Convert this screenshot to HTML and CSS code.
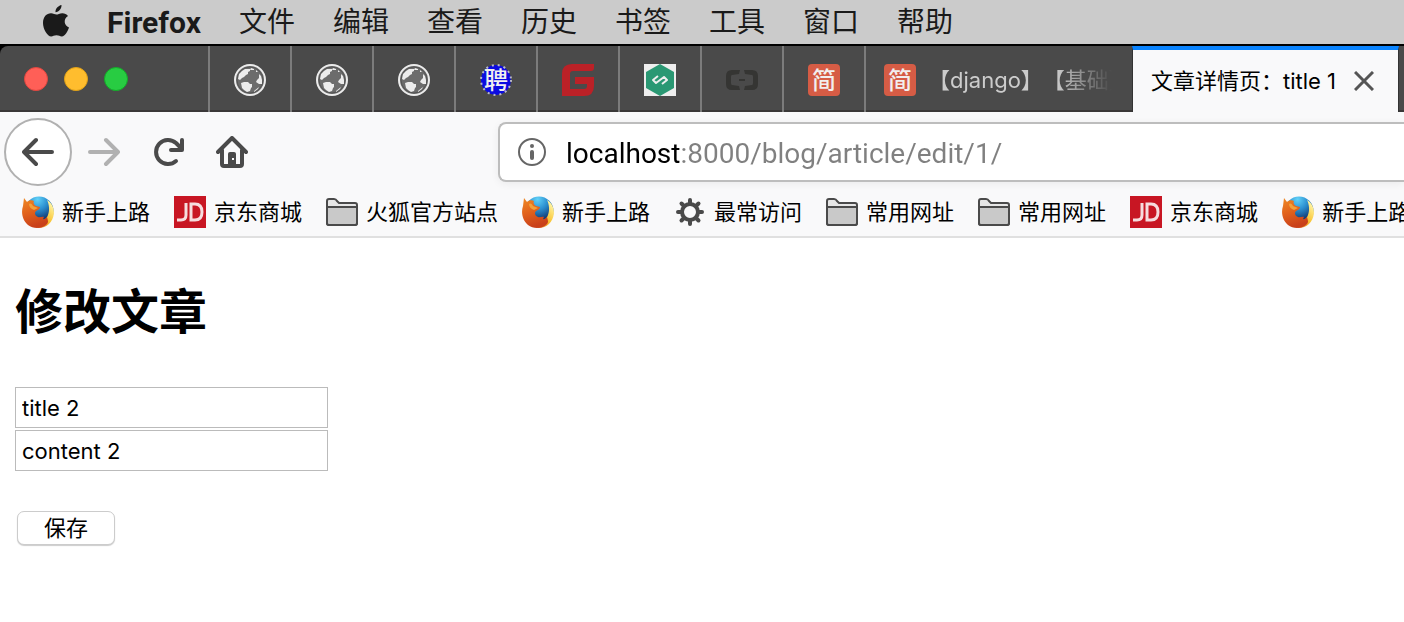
FILE: index.html
```html
<!DOCTYPE html>
<html lang="zh-CN">
  <head>
    <meta charset="UTF-8" />
    <meta name="viewport" content="width=device-width, initial-scale=1.0" />
    <title>文章详情页&#xFF1A;title 1</title>
    <link rel="stylesheet" href="styles.css">
  </head>
  <body>
    <!-- shared icons -->
    <svg class="sprite" aria-hidden="true">
      <defs>
        <radialGradient id="globeBlue" cx="0.45" cy="0.1" r="0.7">
          <stop offset="0" stop-color="#62d2f8" />
          <stop offset="0.5" stop-color="#2b8fd0" />
          <stop offset="1" stop-color="#123a72" />
        </radialGradient>
        <linearGradient id="foxFire" x1="0" y1="0" x2="0.3" y2="1">
          <stop offset="0" stop-color="#ee8a25" />
          <stop offset="0.5" stop-color="#e2631c" />
          <stop offset="1" stop-color="#c9401a" />
        </linearGradient>
        <linearGradient id="foxTail" x1="0.6" y1="0" x2="0" y2="1">
          <stop offset="0" stop-color="#fff3a0" />
          <stop offset="0.5" stop-color="#f9c433" />
          <stop offset="1" stop-color="#e2631c" />
        </linearGradient>
      </defs>
      <symbol id="globe" viewBox="0 0 32 32">
        <circle cx="16" cy="16" r="15" fill="#6c6c6c" stroke="#ececec" stroke-width="2" />
        <circle cx="16" cy="16" r="13" fill="none" stroke="#555" stroke-width="1" />
        <path fill="#ececec" d="M4 15 5 10 8 7 11 5 16 5 16 7 14 8 14 10 12 11 10 13 8 14 6 16ZM7 19 10 18 14 18 16 20 18 20 18 23 17 24 16 27 13 28 10 26 8 24ZM22 18 23 16 25 14 25 10 27 12 28 16 28 20 25 20ZM17 4 20 5 20 6 16 6ZM22 6 24 8 22 8ZM20 27 25 23 24 25 20 28Z" />
      </symbol>
      <symbol id="jian" viewBox="0 0 32 32">
        <rect width="32" height="32" rx="4" fill="#d65c45" />
        <text class="glyph" x="16" y="25" font-size="24" text-anchor="middle" fill="#f2eeee">简</text>
      </symbol>
      <symbol id="firefox" viewBox="0 0 32 32">
        <circle cx="17" cy="15" r="14.5" fill="url(#globeBlue)" />
        <path fill="url(#foxTail)" d="M25 4C30 7 32 12 32 17 31 26 25 32 16 32L15 27C21 27 24 24 26 19 28 14 27 8 25 4Z" />
        <path fill="url(#foxFire)" d="M2 2 5 6C7 4 10 4 12 5 11 7 12 9 14 10L18 11C18 13 16 14 14 15 12 17 13 20 16 21 18 22 20 20 22 21 20 24 22 24 25 21 26 25 27 26 24 29 19 33 11 33 6 29 0 24-1 16 1 10Z" />
        <path fill="#f3a23a" d="M7 8C9 7 10 8 11 10L16 12 12 14C9 13 7 11 7 8Z" />
      </symbol>
      <symbol id="jd" viewBox="0 0 32 32">
        <rect width="32" height="32" fill="#c81623" />
        <path fill="none" stroke="#f6dcde" stroke-width="3" d="M12 7V19Q12 24 7 24H3M17 8V24H21Q28 24 28 16 28 8 21 8Z" />
      </symbol>
      <symbol id="folder" viewBox="0 0 32 32">
        <path fill="#e6e6e6" stroke="#4a4a4a" stroke-width="2" stroke-linejoin="round" d="M1 27V5Q1 3 3 3H8Q10 3 11 5L13 7H29Q31 7 31 9V27Q31 29 29 29H3Q1 29 1 27Z" />
        <path fill="#c9c9c9" stroke="#4a4a4a" stroke-width="2" d="M1 11H31V27Q31 29 29 29H3Q1 29 1 27Z" />
      </symbol>
      <symbol id="gear" viewBox="0 0 32 32">
        <circle cx="16" cy="16" r="8" fill="none" stroke="#4a4a4a" stroke-width="4" />
        <path stroke="#4a4a4a" stroke-width="4" stroke-linecap="round" d="M16 4V7M16 25V28M4 16H7M25 16H28M7.500 7.500 10 10M22 22 24.500 24.500M24.500 7.500 22 10M10 22 7.500 24.500" />
      </symbol>
    </svg>

    <nav class="menu-bar">
      <svg class="apple" viewBox="0 0 26 32" aria-label="Apple">
        <path fill="#1a1a1a" d="M18.500 0C18.800 3.600 16 7 12.500 7.200 12.200 3.800 15.200.600 18.500 0ZM25 11C20 14 21 20.500 26 22.600 25 26 22 31.500 18.800 31.500 16.800 31.500 16 30.300 13.500 30.300 11 30.300 10 31.500 8.200 31.500 4.500 31.500 0 24 0 18 0 12 3.500 8.300 8 8.300 10.300 8.300 12 9.600 13.400 9.600 14.800 9.600 16.800 8.100 19.500 8.200 21.500 8.300 23.700 9.200 25 11Z" />
      </svg>
      <strong>Firefox</strong>
      <span>文件</span>
      <span>编辑</span>
      <span>查看</span>
      <span>历史</span>
      <span>书签</span>
      <span>工具</span>
      <span>窗口</span>
      <span>帮助</span>
    </nav>

    <div class="tab-frame">
      <div class="tab-bar">
        <div class="window-buttons">
          <button class="dot close" aria-label="关闭"></button>
          <button class="dot minimize" aria-label="最小化"></button>
          <button class="dot zoom" aria-label="缩放"></button>
        </div>
        <div class="tab"><svg class="icon"><use href="#globe" /></svg></div>
        <div class="tab"><svg class="icon"><use href="#globe" /></svg></div>
        <div class="tab"><svg class="icon"><use href="#globe" /></svg></div>
        <div class="tab">
          <svg class="icon" viewBox="0 0 32 32">
            <circle cx="16" cy="16" r="15" fill="#0b0be0" />
            <circle cx="16" cy="16" r="15" fill="none" stroke="#b8b8c8" stroke-width="2" stroke-dasharray="2 4" />
            <text class="glyph" x="16" y="25" font-size="24" text-anchor="middle" fill="#f0f0f0">聘</text>
          </svg>
        </div>
        <div class="tab">
          <svg class="icon" viewBox="0 0 32 32">
            <path fill="#bb2127" d="M10 0H32V4Q32 7 29 7H11Q8 7 8 10V25H22Q25 25 25 22V20H13V13H32V22Q32 32 22 32H0V10Q0 0 10 0Z" />
          </svg>
        </div>
        <div class="tab">
          <svg class="icon" viewBox="0 0 32 32">
            <rect width="32" height="32" fill="#eee" />
            <path fill="#2a9873" d="M16 0 30 8V24L16 32 2 24V8Z" />
            <path fill="none" stroke="#eee" stroke-width="2" stroke-linejoin="round" d="M14 12 9 16 12 19 20 13 23 16 18 20" />
          </svg>
        </div>
        <div class="tab">
          <svg class="icon" viewBox="0 0 32 32">
            <path fill="#353533" d="M14 6 13 10 6 11Q5 11 5 13V19Q5 21 6 21L13 22 14 26H6Q0 26 0 20V12Q0 6 6 6ZM18 6 19 10 26 11Q27 11 27 13V19Q27 21 26 21L19 22 18 26H26Q32 26 32 20V12Q32 6 26 6ZM13 15H19V17H13Z" />
          </svg>
        </div>
        <div class="tab"><svg class="icon"><use href="#jian" /></svg></div>
        <div class="tab wide">
          <svg class="icon"><use href="#jian" /></svg>
          <span class="tab-title">【django】【基础】</span>
        </div>
        <div class="tab active">
          <span>文章详情页&#xFF1A;title 1</span>
          <button class="tab-close" aria-label="关闭标签页">
            <svg viewBox="0 0 20 20"><path d="M1 1 19 19M19 1 1 19" /></svg>
          </button>
        </div>
      </div>
    </div>

    <div class="toolbar">
      <div class="nav-buttons">
        <button class="back" aria-label="后退">
          <svg class="icon line" viewBox="0 0 32 32"><path d="M30 16H2M14 4 2 16 14 28" /></svg>
        </button>
        <button class="forward" aria-label="前进" disabled>
          <svg class="icon line" viewBox="0 0 32 32"><path d="M2 16H30M18 4 30 16 18 28" /></svg>
        </button>
        <button aria-label="刷新">
          <svg class="icon line" viewBox="0 0 32 32">
            <path d="M24 25A12 12 0 1 1 24 7L28 11M30 4V14H19" />
          </svg>
        </button>
        <button aria-label="主页">
          <svg class="icon line" viewBox="0 0 32 32">
            <path d="M2 16 16 2 30 16M6 14V28Q6 30 8 30H24Q26 30 26 28V14" />
            <path class="door" d="M12 30V18Q12 16 14 16H18Q20 16 20 18V30Z" />
            <rect x="16" y="22" width="2" height="2" fill="#f9f9fa" stroke="none" />
          </svg>
        </button>
      </div>
      <div class="url-bar">
        <svg class="info" viewBox="0 0 28 28">
          <circle cx="14" cy="14" r="13" />
          <path d="M14 14V20" stroke-width="4" stroke-linecap="round" />
          <circle class="info-dot" cx="14" cy="8" r="2" />
        </svg>
        <input type="text" class="url" aria-label="地址" value="localhost:8000/blog/article/edit/1/" />
      </div>
    </div>

    <div class="bookmarks">
      <a href="#"><svg class="icon"><use href="#firefox" /></svg>新手上路</a>
      <a href="#"><svg class="icon"><use href="#jd" /></svg>京东商城</a>
      <a href="#"><svg class="icon"><use href="#folder" /></svg>火狐官方站点</a>
      <a href="#"><svg class="icon"><use href="#firefox" /></svg>新手上路</a>
      <a href="#"><svg class="icon"><use href="#gear" /></svg>最常访问</a>
      <a href="#"><svg class="icon"><use href="#folder" /></svg>常用网址</a>
      <a href="#"><svg class="icon"><use href="#folder" /></svg>常用网址</a>
      <a href="#"><svg class="icon"><use href="#jd" /></svg>京东商城</a>
      <a href="#"><svg class="icon"><use href="#firefox" /></svg>新手上路</a>
    </div>

    <main>
      <h1>修改文章</h1>
      <form>
        <input type="text" name="title" aria-label="标题" value="title 2" />
        <input type="text" name="content" aria-label="内容" value="content 2" />
        <button type="submit">保存</button>
      </form>
    </main>
  </body>
</html>
```

FILE: styles.css
```css
:root {
  --chrome: #f9f9fa;
  --tab-bg: #4a4a4a;
  --ink: #4a4a4a;
}

* {
  box-sizing: border-box;
}

body {
  margin: 0;
  font-family: Inter, "Noto Sans CJK SC", sans-serif;
  font-size: 22px;
  color: #000;
  background: white;
  overflow: hidden;
  text-spacing-trim: space-all;
}

button {
  border: none;
  background: none;
  padding: 0;
  font: inherit;
  color: inherit;
}

.sprite {
  position: absolute;
  width: 0;
  height: 0;
}

.icon {
  width: 32px;
  height: 32px;
  flex: none;
  display: block;
}

.glyph {
  font-family: "Noto Sans CJK SC", sans-serif;
  font-weight: 500;
}

/* menu bar */
.menu-bar {
  display: flex;
  align-items: center;
  gap: 38px;
  height: 44px;
  padding: 2px 0 0 43px;
  background: #cbcbcb;
  color: #1a1a1a;
  font-family: Roboto, "Noto Sans CJK SC", sans-serif;
  font-size: 28px;
  line-height: 40px;
  white-space: nowrap;
}

.menu-bar strong {
  font-size: 30px;
}

.apple {
  width: 26px;
  height: 32px;
  margin-bottom: 4px;
}

/* tabs */
.tab-frame {
  background: #000;
  padding-top: 2px;
}

.tab-bar {
  display: flex;
  height: 66px;
  background: var(--tab-bg);
  border-top-left-radius: 8px;
  box-shadow: inset 0 -2px #3a3838;
}

.window-buttons {
  display: flex;
  align-items: center;
  gap: 16px;
  width: 208px;
  padding-left: 24px;
  flex: none;
}

.dot {
  width: 24px;
  height: 24px;
  border-radius: 50%;
}

.close {
  background: #ff5f57;
  border: 1px solid #e2463f;
}

.minimize {
  background: #ffbd2e;
  border: 1px solid #e1a116;
}

.zoom {
  background: #28cc42;
  border: 1px solid #12ac28;
}

.tab {
  display: flex;
  align-items: center;
  justify-content: center;
  flex: none;
  width: 82px;
  padding-top: 2px;
  border-left: 2px solid #7c7c7c;
}

.tab.wide {
  width: 268px;
  padding-left: 18px;
  justify-content: flex-start;
  gap: 12px;
  color: #ccc;
  line-height: 28px;
}

.tab-title {
  width: 184px;
  overflow: hidden;
  white-space: nowrap;
  mask-image: linear-gradient(to right, #000 128px, transparent);
}

.tab.active {
  width: 267px;
  padding: 0 24px 0 18px;
  justify-content: space-between;
  background: var(--chrome);
  border-left: 1px solid #333;
  border-right: 1px solid #333;
  border-top: 4px solid #0a84ff;
  line-height: 28px;
  white-space: nowrap;
}

.tab-close svg {
  display: block;
  width: 20px;
  height: 20px;
  stroke: #555;
  stroke-width: 3;
}

/* navigation */
.toolbar {
  display: flex;
  align-items: center;
  height: 80px;
  background: var(--chrome);
}

.nav-buttons {
  display: flex;
  align-items: center;
  gap: 32px;
  width: 498px;
  padding-left: 4px;
  flex: none;
}

.line {
  fill: none;
  stroke: var(--ink);
  stroke-width: 4;
  stroke-linecap: round;
  stroke-linejoin: round;
}

.back {
  width: 68px;
  height: 68px;
  padding: 16px;
  border: 2px solid #b1b1b1;
  border-radius: 50%;
  background: white;
}

.forward {
  margin-left: -16px;
}

.forward .line {
  stroke: #b1b1b1;
}

.line .door {
  fill: var(--ink);
  stroke: none;
}

.url-bar {
  display: flex;
  align-items: center;
  gap: 20px;
  flex: 1;
  height: 60px;
  padding-left: 18px;
  border: 2px solid #bdbdbd;
  border-right: none;
  border-radius: 8px 0 0 8px;
  background: white;
  box-shadow: 0 2px 8px rgba(0, 0, 0, 0.06);
}

.info {
  width: 28px;
  height: 28px;
  flex: none;
  fill: none;
  stroke: #666;
  stroke-width: 2;
}

.info-dot {
  fill: #666;
  stroke: none;
}

/* host in black, the rest of the address in grey */
.url {
  flex: 1;
  border: none;
  outline: none;
  padding: 4px 0 0;
  font-family: Roboto, sans-serif;
  font-size: 28px;
  line-height: 40px;
  color: transparent;
  background: linear-gradient(to right, #000 114px, #808080 114px);
  -webkit-background-clip: text;
  background-clip: text;
}

/* bookmarks */
.bookmarks {
  display: flex;
  align-items: center;
  gap: 24px;
  height: 46px;
  padding: 0 0 4px 22px;
  background: var(--chrome);
  border-bottom: 2px solid #e0e0e0;
  white-space: nowrap;
  overflow: hidden;
}

.bookmarks a {
  display: flex;
  align-items: center;
  gap: 8px;
  flex: none;
  color: #000;
  text-decoration: none;
  line-height: 32px;
}

/* page */
main {
  padding: 38px 15px;
}

h1 {
  margin: 0 0 39px;
  font-size: 48px;
  line-height: 72px;
}

form {
  display: flex;
  flex-direction: column;
  align-items: flex-start;
  gap: 2px;
}

form input {
  width: 313px;
  height: 41px;
  padding: 0 6px;
  border: 1px solid #bbb;
  font: inherit;
}

form button {
  width: 98px;
  height: 34px;
  margin: 38px 2px;
  border: 1px solid #ccc;
  border-radius: 7px;
  background: white;
  box-shadow: 0 1px 1px rgba(0, 0, 0, 0.2);
  line-height: 32px;
}
```
